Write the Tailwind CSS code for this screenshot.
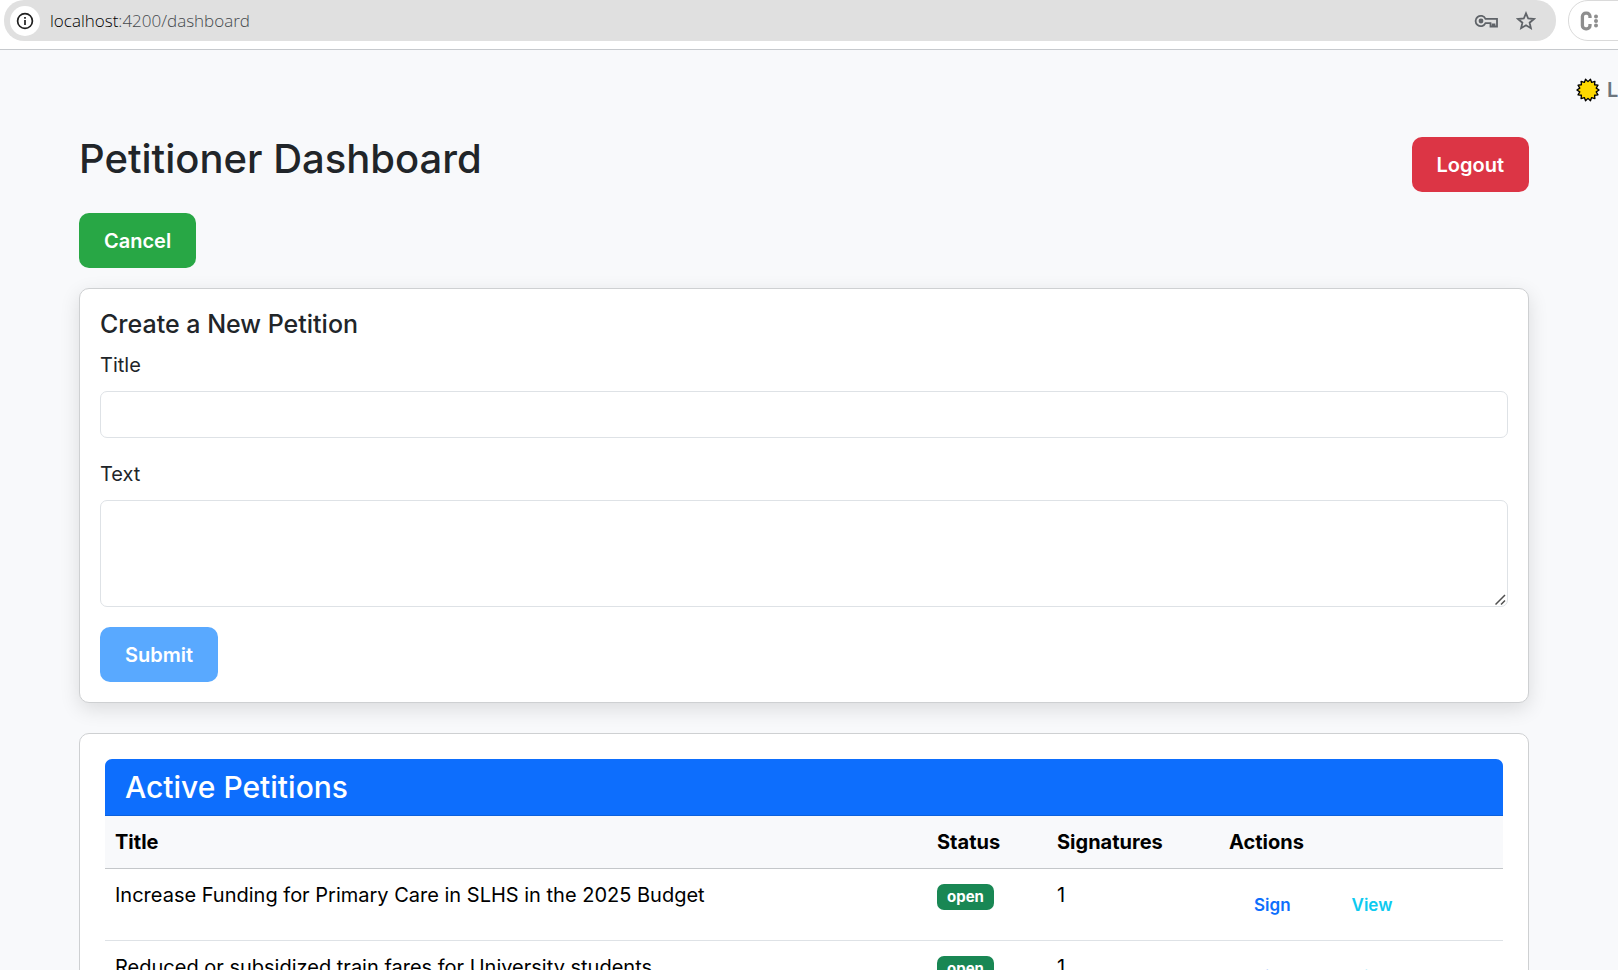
<!DOCTYPE html>
<html lang="en">
<head>
<meta charset="utf-8">
<title>Petitioner Dashboard</title>
<script src="https://cdn.jsdelivr.net/npm/@tailwindcss/browser@4"></script>
</head>
<body class="flex h-screen flex-col overflow-hidden bg-[#f8f9fb] font-['Inter',sans-serif] text-xl leading-[30px] text-[#212529]">
  <header class="flex h-[50px] shrink-0 items-start gap-3 overflow-hidden border-b border-[#c6c9cd] bg-white pl-1">
    <div class="flex h-[41px] grow items-center rounded-[20px] bg-[#e0e0e0] pl-[6px] pr-5">
      <button type="button" aria-label="Site information" class="flex size-[30px] items-center justify-center rounded-full bg-white">
        <svg class="size-[18px]" viewBox="0 0 18 18" fill="none" stroke="#1f1f1f" stroke-width="1.7"><circle cx="9" cy="9" r="7.4"/><path d="M9 8v5M9 4.900v1.800"/></svg>
      </button>
      <a href="#" class="ml-[10px] grow font-['Open_Sans',sans-serif] text-[17px] font-light text-black">localhost<span class="text-[#45494d]">:4200/dashboard</span></a>
      <button type="button" aria-label="Passwords" class="mr-[18px] flex size-6 items-center justify-center">
        <svg class="h-4 w-6" viewBox="0 0 24 16" fill="none" stroke="#5f6368" stroke-width="1.8"><path d="M11.500 5.800A5.200 5.200 0 1 0 11.500 10.200h5v3.300h2.200v-2h1.800v2H23V5.800z"/><circle cx="7" cy="8" r="2.400" fill="#5f6368" stroke="none"/></svg>
      </button>
      <button type="button" aria-label="Bookmark" class="flex size-5 items-center justify-center">
        <svg class="size-5" viewBox="0 0 20 20" fill="none" stroke="#5f6368" stroke-width="1.8"><path d="M10 2.300l2.200 5.200 5.700.5-4.300 3.700 1.300 5.500-4.900-2.900-4.900 2.900 1.300-5.500L2.100 8l5.700-.5z"/></svg>
      </button>
    </div>
    <div class="h-[41px] w-[50px] shrink-0 overflow-hidden">
      <button type="button" aria-label="Extension" class="flex h-[41px] w-20 items-center rounded-[20px] border border-[#dadada] bg-white pl-[11px]">
        <svg class="h-5 w-5" viewBox="0 0 20 20" fill="none" stroke="#8e8e8e" stroke-width="3.300"><path d="M10 7V5.500a3.400 3.400 0 0 0-3.400-3.400h-.8A3.400 3.400 0 0 0 2.400 5.500v9a3.400 3.400 0 0 0 3.400 3.400h.8A3.400 3.400 0 0 0 10 14.500V13"/><g fill="#8e8e8e" stroke="none"><circle cx="16" cy="5.500" r="2"/><circle cx="16" cy="10" r="2"/><circle cx="16" cy="14.500" r="2"/></g></svg>
      </button>
    </div>
  </header>

  <div class="flex h-20 shrink-0 justify-end overflow-hidden">
    <button type="button" class="mt-[25px] flex h-[30px] w-[42px] items-center gap-[7px] overflow-hidden font-semibold text-[#6c757d]">
      <svg class="size-6 shrink-0" viewBox="-12 -12 24 24"><polygon id="sun" fill="#fdd800" stroke="#000" stroke-width="1.300" stroke-linejoin="round" points=""/></svg>
      <span>L</span>
    </button>
  </div>

  <main class="shrink-0 pl-[79px] pr-[89px]">
    <div class="flex items-start justify-between pt-[5px]">
      <h1 class="text-[40px] font-medium leading-[48px]">Petitioner Dashboard</h1>
      <button type="button" class="mt-[2px] h-[55px] rounded-[10px] bg-[#dc3545] px-[25px] font-semibold text-white">Logout</button>
    </div>
    <button type="button" class="mt-[21px] h-[55px] rounded-[10px] bg-[#28a745] px-[25px] font-semibold text-white">Cancel</button>

    <form class="mt-5 rounded-[10px] border border-[#ced0d2] bg-white p-5 shadow-[0_6px_20px_rgba(0,0,0,0.12)]">
      <h2 class="text-[25px] font-medium leading-[30px]">Create a New Petition</h2>
      <label for="title" class="mt-[11px] block">Title</label>
      <input id="title" type="text" class="mt-[11px] block h-[47px] w-full rounded-[7px] border border-[#dee2e6] bg-white px-4">
      <label for="text" class="mt-[21px] block">Text</label>
      <div class="relative mt-[11px]">
        <textarea id="text" class="block h-[107px] w-full resize-none rounded-[7px] border border-[#dee2e6] bg-white px-4 py-2"></textarea>
        <svg class="pointer-events-none absolute bottom-[2px] right-[2px] size-[11px]" viewBox="0 0 11 11" stroke="#505050" stroke-width="1.500"><path d="M.5 10.500l9.500-9.500M6 10.500l4-4"/></svg>
      </div>
      <button type="submit" disabled class="mt-5 block h-[55px] rounded-[10px] bg-[#59a9ff] px-[25px] font-semibold text-white">Submit</button>
    </form>

    <section class="mt-[30px] rounded-[10px] border border-[#ced0d2] bg-white p-[25px]">
      <h2 class="rounded-t-[7px] border-b border-[#0c61dc] bg-[#0d6efd] px-5 py-[10px] text-[30px] font-medium leading-9 text-white">Active Petitions</h2>
      <table class="w-full table-fixed text-left text-black">
        <colgroup><col><col class="w-[120px]"><col class="w-[172px]"><col class="w-[284px]"></colgroup>
        <thead>
          <tr class="h-[52px] border-b border-[#c4c7ca] bg-[#f8f9fb] font-semibold">
            <th scope="col" class="px-[10px]">Title</th><th scope="col" class="px-[10px]">Status</th><th scope="col" class="px-[10px]">Signatures</th><th scope="col" class="px-[10px]">Actions</th>
          </tr>
        </thead>
        <tbody class="align-top">
          <tr class="h-[72px] border-b border-[#dee2e6]">
            <td class="px-[10px] pt-[11px]">Increase Funding for Primary Care in SLHS in the 2025 Budget</td>
            <td class="px-[10px] pt-[15px]"><span class="block h-[26px] w-fit rounded-[7px] bg-[#198754] px-[10px] text-[15px] font-bold leading-[26px] text-white">open</span></td>
            <td class="px-[10px] pt-[11px]">1</td>
            <td class="px-[10px] pt-[10px]"><div class="flex gap-[11px] text-[17px] font-semibold"><button type="button" class="h-[52px] px-[25px] text-[#0d6efd]">Sign</button><button type="button" class="h-[52px] px-[25px] text-[#0dcaf0]">View</button></div></td>
          </tr>
          <tr class="h-[72px] border-b border-[#dee2e6]">
            <td class="px-[10px] pt-[11px]">Reduced or subsidized train fares for University students</td>
            <td class="px-[10px] pt-[15px]"><span class="block h-[26px] w-fit rounded-[7px] bg-[#198754] px-[10px] text-[15px] font-bold leading-[26px] text-white">open</span></td>
            <td class="px-[10px] pt-[11px]">1</td>
            <td class="px-[10px] pt-[10px]"><div class="flex gap-[11px] text-[17px] font-semibold"><button type="button" class="h-[52px] px-[25px] text-[#0d6efd]">Sign</button><button type="button" class="h-[52px] px-[25px] text-[#0dcaf0]">View</button></div></td>
          </tr>
        </tbody>
      </table>
    </section>
  </main>
  <script>
    // Fourteen-pointed sun outline
    const points = [];
    for (let i = 0; i < 28; i++) {
      const r = i % 2 ? 8.4 : 11.1, a = i * Math.PI / 14;
      points.push((r * Math.cos(a)).toFixed(2) + ',' + (r * Math.sin(a)).toFixed(2));
    }
    document.getElementById('sun').setAttribute('points', points.join(' '));
  </script>
</body>
</html>
